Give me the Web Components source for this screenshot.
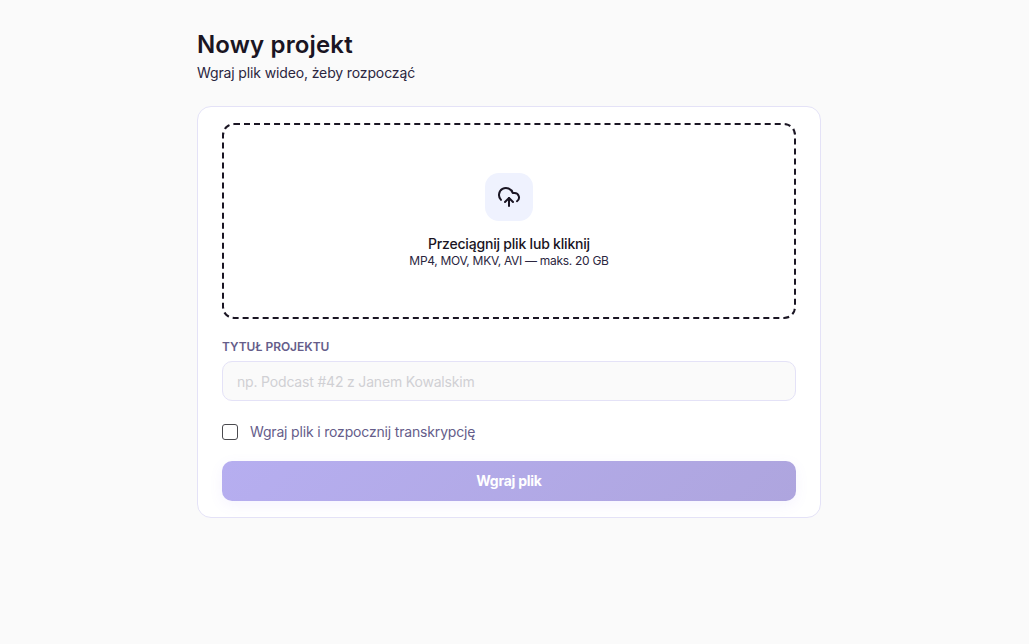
<!DOCTYPE html>
<html lang="pl"><head><meta charset="utf-8"><title>Nowy projekt</title>
<style>
html,body{margin:0;height:100%;background:#fafafa;overflow:hidden}
body{font-family:Inter,"Noto Sans",sans-serif;color:#1a1523}
</style></head><body>
<new-project-page></new-project-page>
<script>
function def(name,html){customElements.define(name,class extends HTMLElement{constructor(){super();this.attachShadow({mode:'open'}).innerHTML=html}})}
def('page-header',`<style>
:host{display:block;margin-bottom:23px}
h1{margin:0;font:600 24px/30px Inter,sans-serif;letter-spacing:.15px;color:#1a1523}
p{margin:3px 0 0;font:400 14px/20px Inter,sans-serif;letter-spacing:-.13px;color:#2b2640}
</style><h1><slot name="title"></slot></h1><p><slot name="sub"></slot></p>`);
def('drop-zone',`<style>
:host{display:flex;flex-direction:column;align-items:center;justify-content:center;box-sizing:border-box;height:196px;border:2px dashed #1a1523;border-radius:12px;padding-bottom:2px}
.ic{width:48px;height:48px;border-radius:14px;background:#eff2fe;display:flex;align-items:center;justify-content:center;margin-bottom:14px}
svg{width:24px;height:24px;fill:none;stroke:#1a1523;stroke-width:2;stroke-linecap:round;stroke-linejoin:round}
.a{font:500 14px/17px Inter,sans-serif;letter-spacing:-.2px;color:#1a1523}
.b{margin-top:1px;font:400 12px/15px Inter,sans-serif;letter-spacing:-.3px;color:#2b2640}
</style><div class="ic"><svg viewBox="0 0 24 24"><path d="M12 13v8"/><path d="M4 14.899A7 7 0 1 1 15.71 8h1.79a4.5 4.5 0 0 1 2.5 8.242"/><path d="m8 17 4-4 4 4"/></svg></div>
<div class="a"><slot name="title"></slot></div><div class="b"><slot name="hint"></slot></div>`);
def('text-field',`<style>
:host{display:block;margin-top:20px}
label{display:block;font:600 12px/16px Inter,sans-serif;letter-spacing:-.05px;color:#655d8a;margin-bottom:6px}
.box{box-sizing:border-box;height:40px;border:1px solid #e4e2f7;border-radius:10px;background:#fafafa;padding:1px 14px 0;display:flex;align-items:center}
span{font:400 14px/20px Inter,sans-serif;letter-spacing:-.18px;color:#d0d0d4}
</style><label><slot name="label"></slot></label><div class="box"><span><slot name="ph"></slot></span></div>`);
def('check-row',`<style>
:host{display:flex;align-items:center;gap:12px;margin-top:21px;height:20px}
i{display:block;box-sizing:border-box;width:16px;height:16px;border:1px solid #4a4a4f;border-radius:3px;background:#fff}
span{font:400 14px/20px Inter,sans-serif;letter-spacing:-.17px;color:#655d8a}
</style><i></i><span><slot></slot></span>`);
def('submit-button',`<style>
:host{display:flex;align-items:center;justify-content:center;height:40px;margin-top:19px;border-radius:10px;background:linear-gradient(135deg,#b6aef0,#aea5de);box-shadow:0 4px 14px rgba(124,108,240,.08);color:#fff;font:700 14px/20px Inter,sans-serif;letter-spacing:-.25px}
</style><slot></slot>`);
def('upload-card',`<style>
:host{display:block;box-sizing:border-box;background:#fff;border:1px solid #e4e2f7;border-radius:14px;padding:16px 24px}
</style><slot></slot>`);
def('new-project-page',`<style>
:host{display:flex;justify-content:center;box-sizing:border-box;padding:30px 11px 0 0}
.w{width:624px}
</style><div class="w">
<page-header><span slot="title">Nowy projekt</span><span slot="sub">Wgraj plik wideo, żeby rozpocząć</span></page-header>
<upload-card>
<drop-zone><span slot="title">Przeciągnij plik lub kliknij</span><span slot="hint">MP4, MOV, MKV, AVI — maks. 20 GB</span></drop-zone>
<text-field><span slot="label">TYTUŁ PROJEKTU</span><span slot="ph">np. Podcast #42 z Janem Kowalskim</span></text-field>
<check-row>Wgraj plik i rozpocznij transkrypcję</check-row>
<submit-button>Wgraj plik</submit-button>
</upload-card></div>`);
</script></body></html>
